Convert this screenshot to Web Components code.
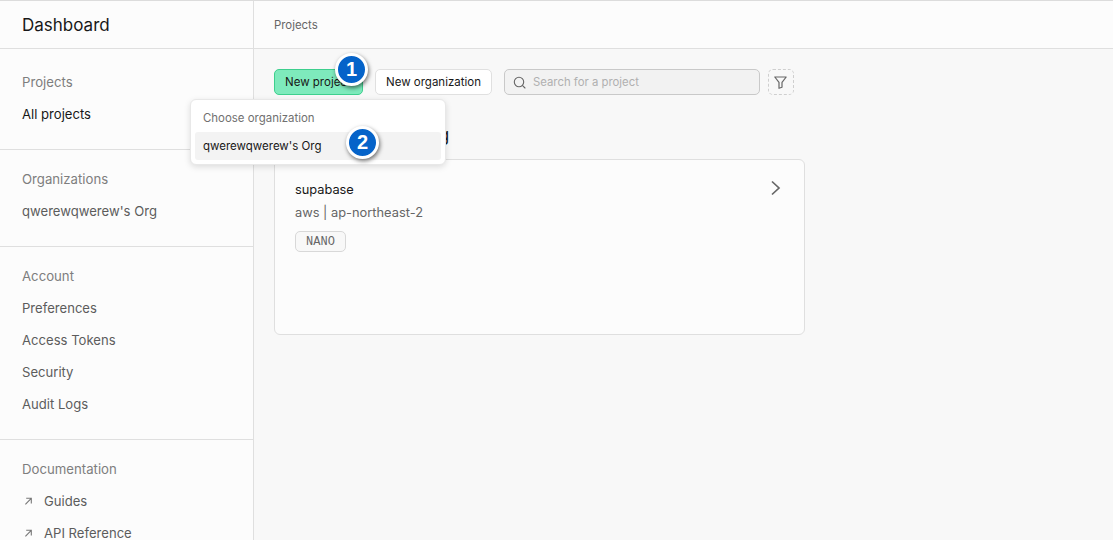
<!DOCTYPE html>
<html>
<head>
<meta charset="utf-8">
<title>Projects</title>
<style>
    html, body { margin: 0; height: 100%; overflow: hidden; }
    body {
        font-family: "Inter", "Liberation Sans", sans-serif;
        color: #181818;
        background: #f8f8f8;
    }
</style>
</head>
<body>
<app-shell>
    <side-bar slot="side">
        <side-section title="Projects" first>
            <side-link active>All projects</side-link>
        </side-section>
        <side-section title="Organizations">
            <side-link>qwerewqwerew's Org</side-link>
        </side-section>
        <side-section title="Account">
            <side-link>Preferences</side-link>
            <side-link>Access Tokens</side-link>
            <side-link>Security</side-link>
            <side-link>Audit Logs</side-link>
        </side-section>
        <side-section title="Documentation" last>
            <side-link external>Guides</side-link>
            <side-link external>API Reference</side-link>
        </side-section>
    </side-bar>
    <projects-page></projects-page>
</app-shell>

<template id="app-shell-template">
    <style>
        :host { display: flex; width: 100%; height: 540px; overflow: hidden; border-top: 1px solid #dcdcdc; box-sizing: border-box; }
        .main { flex: 1; min-width: 0; position: relative; }
    </style>
    <slot name="side"></slot>
    <div class="main"><slot></slot></div>
</template>

<template id="side-bar-template">
    <style>
        :host { display: block; width: 254px; flex: none; box-sizing: border-box; height: 539px; overflow: hidden; background: #fcfcfc; border-right: 1px solid #dfdfdf; }
        .brand { height: 47px; border-bottom: 1px solid #dfdfdf; padding-left: 22px; display: flex; align-items: center; font-size: 17px; line-height: 48px; color: #181818; }
    </style>
    <div class="brand">Dashboard</div>
    <slot></slot>
</template>

<template id="side-section-template">
    <style>
        :host { display: block; padding: 13px 22px 19px; border-bottom: 1px solid #dfdfdf; }
        :host([first]) { padding: 17px 22px 19px; }
        :host([last]) { border-bottom: 0; }
        .title { height: 32px; line-height: 32px; font-size: 13.2px; color: #7e7e7e; }
    </style>
    <div class="title"></div>
    <slot></slot>
</template>

<template id="side-link-template">
    <style>
        :host { display: flex; align-items: center; height: 32px; font-size: 13.1px; color: #5c5c5c; white-space: nowrap; }
        :host([active]) { color: #181818; }
        svg { width: 12px; height: 12px; margin-right: 10px; display: none; color: #777; }
        :host([external]) svg { display: block; }
    </style>
    <svg viewBox="0 0 12 12" fill="none" stroke="currentColor" stroke-width="1.1"><path d="M3.4 9.4 9 3.6M4.2 3.3h5.1v5.1"/></svg>
    <slot></slot>
</template>

<template id="projects-page-template">
    <style>
        :host { display: block; }
        .crumb { height: 47px; background: #fcfcfc; border-bottom: 1px solid #dfdfdf; padding-left: 20px; display: flex; align-items: center; font-size: 11.4px; color: #666; }
        .content { padding: 20px 20px 0; }
        .toolbar { display: flex; align-items: center; }
        .search { margin-left: 12px; }
        .filter { margin-left: 8px; width: 26px; height: 26px; box-sizing: border-box; border: 1px dashed #cfcfcf; border-radius: 5px; display: flex; align-items: center; justify-content: center; color: #666; }
        .heading { margin: 28px 0 12px; height: 24px; line-height: 24px; font-size: 17px; font-weight: 400; color: #181818; white-space: nowrap; }
    </style>
    <div class="crumb">Projects</div>
    <div class="content">
        <div class="toolbar">
            <ui-button primary>New project</ui-button>
            <ui-button style="margin-left:12px">New organization</ui-button>
            <search-box class="search">Search for a project</search-box>
            <div class="filter">
                <svg width="13" height="13" viewBox="0 0 13 13" fill="none" stroke="currentColor" stroke-width="1.2" stroke-linejoin="round"><path d="M.8 1h11.4L8 6.4v4.8l-3 1.1V6.4z"/></svg>
            </div>
        </div>
        <h2 class="heading">qwerewqwerew's Org</h2>
        <project-card name="supabase" region="aws | ap-northeast-2" plan="NANO"></project-card>
    </div>
    <org-menu></org-menu>
    <step-badge style="left:81px;top:52px">1</step-badge>
    <step-badge style="left:92px;top:125px">2</step-badge>
</template>

<template id="ui-button-template">
    <style>
        :host { display: flex; align-items: center; height: 26px; box-sizing: border-box; padding: 0 10px; border: 1px solid #e0e0e0; border-radius: 5px; background: #fff; font-size: 11.5px; color: #181818; white-space: nowrap; }
        :host([primary]) { width: 89px; background: #7eeabc; border-color: #3ecf8e; }
    </style>
    <slot></slot>
</template>

<template id="search-box-template">
    <style>
        :host { display: flex; align-items: center; width: 256px; height: 26px; box-sizing: border-box; padding-left: 8px; border: 1px solid #c9c9c9; border-radius: 5px; background: #f2f2f2; font-size: 11.35px; color: #b0b0b0; white-space: nowrap; }
        svg { margin-right: 7px; color: #666; flex: none; }
    </style>
    <svg width="13" height="13" viewBox="0 0 13 13" fill="none" stroke="currentColor" stroke-width="1.1" stroke-linecap="round"><circle cx="6" cy="6" r="4.7"/><path d="M9.6 9.6 12 12"/></svg>
    <slot></slot>
</template>

<template id="project-card-template">
    <style>
        :host { display: block; width: 531px; height: 176px; box-sizing: border-box; padding: 20px 20px; background: #fcfcfc; border: 1px solid #dfdfdf; border-radius: 6px; position: relative; }
        .name { height: 20px; line-height: 20px; font-size: 12.8px; color: #181818; }
        .region { height: 26px; line-height: 26px; font-size: 12.85px; color: #666; }
        .plan { margin-top: 5px; display: inline-flex; align-items: center; justify-content: center; width: 51px; height: 21px; box-sizing: border-box; border: 1px solid #d8d8d8; border-radius: 5px; background: #f8f8f8; font: 12px "Liberation Mono", "DejaVu Sans Mono", monospace; color: #666; }
        svg { position: absolute; right: 21px; top: 20px; color: #666; }
    </style>
    <div class="name"></div>
    <div class="region"></div>
    <div class="plan"></div>
    <svg width="14" height="16" viewBox="0 0 14 16" fill="none" stroke="currentColor" stroke-width="1.7"><path d="M3 1.5 10 8l-7 6.5"/></svg>
</template>

<template id="org-menu-template">
    <style>
        :host { position: absolute; left: -64px; top: 98px; width: 256px; height: 66px; box-sizing: border-box; padding: 5px 4px; background: #fff; border: 1px solid #e8e8e8; border-radius: 6px; box-shadow: 0 2px 6px rgba(0,0,0,.13); }
        .label { height: 27px; line-height: 26px; padding-left: 8px; font-size: 11.45px; color: #707070; }
        .item { height: 28px; line-height: 28px; padding-left: 8px; background: #f3f3f3; border-radius: 3px; font-size: 11.5px; color: #181818; }
    </style>
    <div class="label">Choose organization</div>
    <div class="item">qwerewqwerew's Org</div>
</template>

<template id="step-badge-template">
    <style>
        :host { position: absolute; width: 33px; height: 33px; box-sizing: border-box; border: 3px solid #fff; border-radius: 50%; background: #0563c9; color: #fff; display: flex; align-items: center; justify-content: center; font: 700 20px "Liberation Sans", sans-serif; box-shadow: 1px 2px 4px rgba(0,0,0,.55); }
    </style>
    <slot></slot>
</template>

<script>
    function makeElement(name, setup) {
        const template = document.getElementById(name + '-template')
        class Element extends HTMLElement {
            constructor() {
                super()
                this.attachShadow({ mode: 'open' })
                this.shadowRoot.appendChild(template.content.cloneNode(true))
            }
            connectedCallback() {
                if (setup) setup(this, this.shadowRoot)
            }
        }
        window.customElements.define(name, Element)
    }

    makeElement('app-shell')
    makeElement('side-bar')
    makeElement('side-section', (el, root) => {
        root.querySelector('.title').textContent = el.getAttribute('title')
        el.removeAttribute('title')
    })
    makeElement('side-link')
    makeElement('projects-page')
    makeElement('ui-button')
    makeElement('search-box')
    makeElement('project-card', (el, root) => {
        root.querySelector('.name').textContent = el.getAttribute('name')
        root.querySelector('.region').textContent = el.getAttribute('region')
        root.querySelector('.plan').textContent = el.getAttribute('plan')
    })
    makeElement('org-menu')
    makeElement('step-badge')
</script>
</body>
</html>
